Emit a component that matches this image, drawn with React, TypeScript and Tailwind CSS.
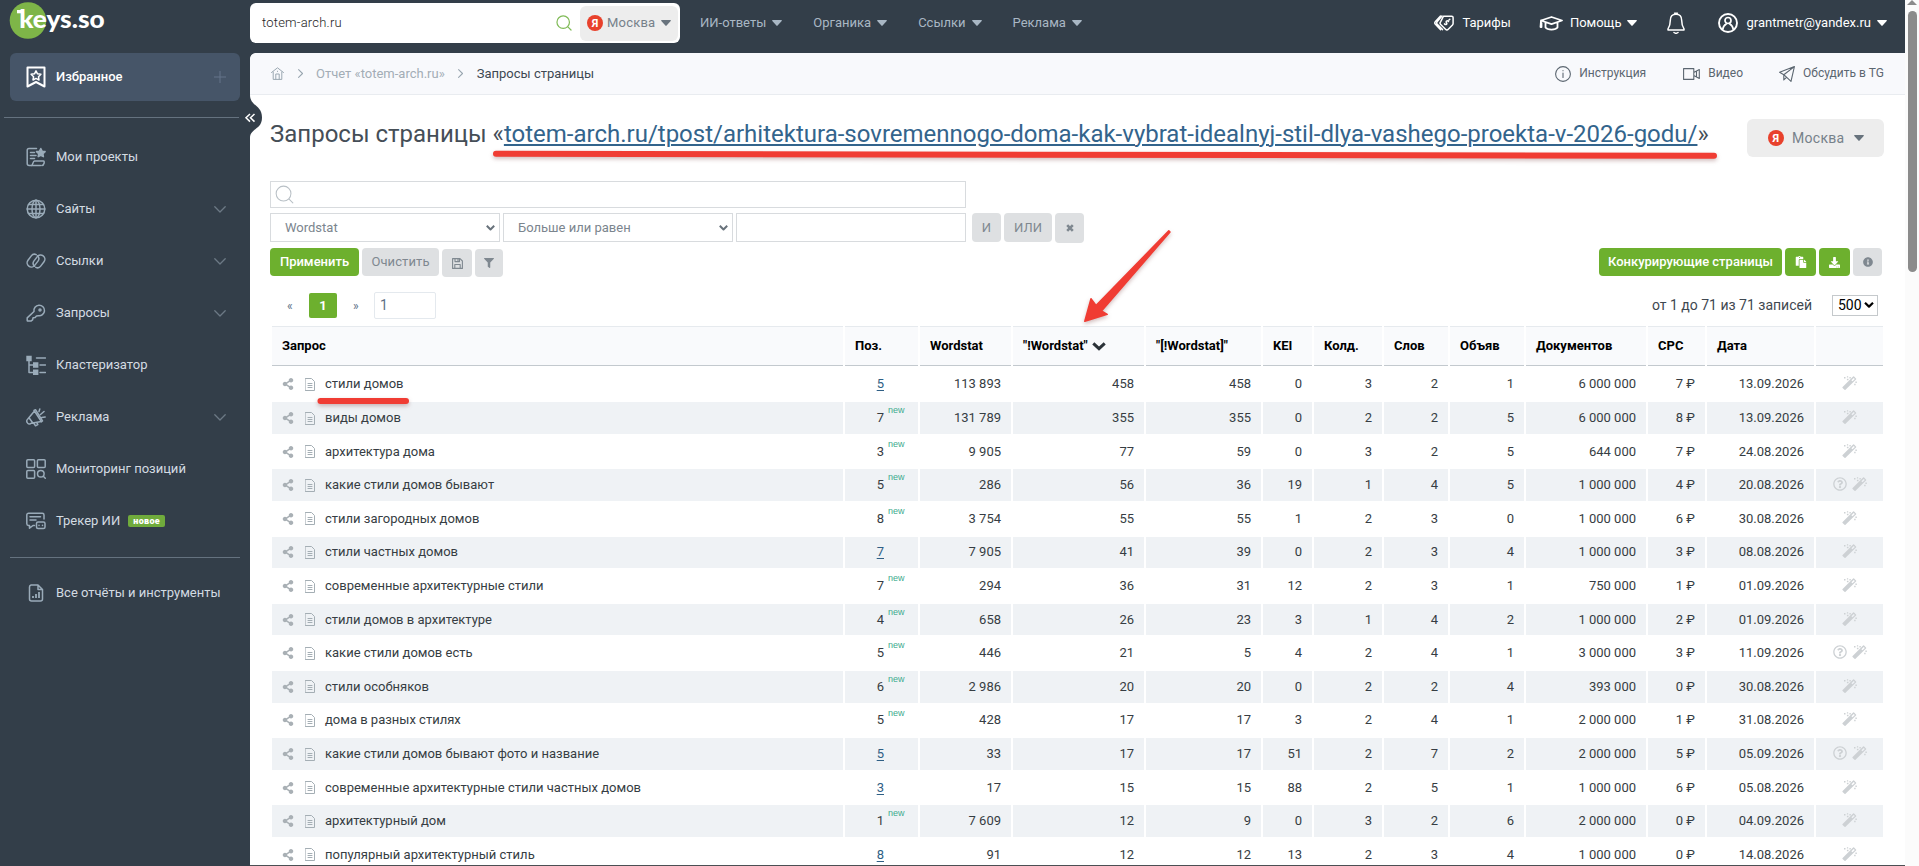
import type { ReactNode } from "react";
import {
  FaDownload,
  FaFilter,
  FaInfoCircle,
  FaPaste,
  FaRegQuestionCircle,
  FaShareAlt,
} from "react-icons/fa";

type Row = {
  query: string;
  pos: number;
  isNew: boolean;
  values: string[];
  question?: boolean;
};

const rows: Row[] = [
  { query: "стили домов", pos: 5, isNew: false, values: ["113 893", "458", "458", "0", "3", "2", "1", "6 000 000", "7 ₽", "13.09.2026"] },
  { query: "виды домов", pos: 7, isNew: true, values: ["131 789", "355", "355", "0", "2", "2", "5", "6 000 000", "8 ₽", "13.09.2026"] },
  { query: "архитектура дома", pos: 3, isNew: true, values: ["9 905", "77", "59", "0", "3", "2", "5", "644 000", "7 ₽", "24.08.2026"] },
  { query: "какие стили домов бывают", pos: 5, isNew: true, values: ["286", "56", "36", "19", "1", "4", "5", "1 000 000", "4 ₽", "20.08.2026"], question: true },
  { query: "стили загородных домов", pos: 8, isNew: true, values: ["3 754", "55", "55", "1", "2", "3", "0", "1 000 000", "6 ₽", "30.08.2026"] },
  { query: "стили частных домов", pos: 7, isNew: false, values: ["7 905", "41", "39", "0", "2", "3", "4", "1 000 000", "3 ₽", "08.08.2026"] },
  { query: "современные архитектурные стили", pos: 7, isNew: true, values: ["294", "36", "31", "12", "2", "3", "1", "750 000", "1 ₽", "01.09.2026"] },
  { query: "стили домов в архитектуре", pos: 4, isNew: true, values: ["658", "26", "23", "3", "1", "4", "2", "1 000 000", "2 ₽", "01.09.2026"] },
  { query: "какие стили домов есть", pos: 5, isNew: true, values: ["446", "21", "5", "4", "2", "4", "1", "3 000 000", "3 ₽", "11.09.2026"], question: true },
  { query: "стили особняков", pos: 6, isNew: true, values: ["2 986", "20", "20", "0", "2", "2", "4", "393 000", "0 ₽", "30.08.2026"] },
  { query: "дома в разных стилях", pos: 5, isNew: true, values: ["428", "17", "17", "3", "2", "4", "1", "2 000 000", "1 ₽", "31.08.2026"] },
  { query: "какие стили домов бывают фото и название", pos: 5, isNew: false, values: ["33", "17", "17", "51", "2", "7", "2", "2 000 000", "5 ₽", "05.09.2026"], question: true },
  { query: "современные архитектурные стили частных домов", pos: 3, isNew: false, values: ["17", "15", "15", "88", "2", "5", "1", "1 000 000", "6 ₽", "05.08.2026"] },
  { query: "архитектурный дом", pos: 1, isNew: true, values: ["7 609", "12", "9", "0", "3", "2", "6", "2 000 000", "0 ₽", "04.09.2026"] },
  { query: "популярный архитектурный стиль", pos: 8, isNew: false, values: ["91", "12", "12", "13", "2", "3", "4", "1 000 000", "0 ₽", "14.08.2026"] },
];

const headers = ["Запрос", "Поз.", "Wordstat", '"!Wordstat"', '"[!Wordstat]"', "KEI", "Колд.", "Слов", "Объяв", "Документов", "CPC", "Дата", ""];

const tableGrid =
  "grid grid-cols-[571px_73px_91px_131px_115px_49px_68px_64px_74px_120px_57px_107px_67px] gap-x-[2px]";

function Icon({ children, className, box = "0 0 20 20" }: { children: ReactNode; className: string; box?: string }) {
  return (
    <svg
      viewBox={box}
      className={className}
      fill="none"
      stroke="currentColor"
      strokeWidth="1.5"
      strokeLinecap="round"
      strokeLinejoin="round"
    >
      {children}
    </svg>
  );
}

function Caret({ className = "" }: { className?: string }) {
  return (
    <svg viewBox="0 0 10 6" className={`h-[6px] w-[10px] shrink-0 ${className}`} fill="currentColor">
      <path d="M.8 0h8.4a.6.6 0 0 1 .5 1L5.6 5.6a.8.8 0 0 1-1.2 0L.3 1a.6.6 0 0 1 .5-1z" />
    </svg>
  );
}

function YandexBadge() {
  return (
    <span className="flex size-4 shrink-0 items-center justify-center rounded-full bg-[#e8412c] text-[11px] font-bold leading-none text-white">
      Я
    </span>
  );
}

function Magnifier({ className, width = "1.5" }: { className: string; width?: string }) {
  return (
    <Icon className={className}>
      <circle cx="9" cy="9" r="7.8" strokeWidth={width} />
      <path d="M14.8 14.8 18.8 18.8" strokeWidth={width} />
    </Icon>
  );
}

function Wand() {
  return (
    <svg viewBox="0 0 15 14" className="h-[14px] w-[15px]" fill="currentColor">
      <path d="M11.1.5a.7.7 0 0 1 1 0l1.9 1.9a.7.7 0 0 1 0 1L3.500 13.800a.7.7 0 0 1-1 0L.6 11.900a.7.7 0 0 1 0-1zM9.400 4.200l1.100 1.100 2.300-2.300-1.100-1.100z" fillRule="evenodd" />
      <path d="M2 1h1.500v1.500H2zM4.900.3h1.300v1.200H4.900zM7.400 1h1.400v1.500H7.400zM4.900 2.700h1.600v1.500H4.900zM13.400 5.400h1.400v1.500h-1.400zM12.200 7.700h1.400v1.500h-1.400z" />
    </svg>
  );
}

const menu = [
  {
    label: "Мои проекты",
    icon: (
      <>
        <path d="M10.5 1.5H3a1.8 1.8 0 0 0-1.8 1.8v13.2a2 2 0 0 0 2 2h11.3" />
        <path d="M4.5 5.5h4M4.5 8.5h5.5M4.5 11.5h4M5.5 18.5c1.3 0 1.3-4.5 3-4.5h9c1.3 0 .8 4.5-1.7 4.5" />
        <path d="m14.8 1.5 1.3 2.7 3 .4-2.2 2.1.5 3-2.6-1.4-2.6 1.4.5-3-2.2-2.1 3-.4z" fill="currentColor" />
      </>
    ),
  },
  {
    label: "Сайты",
    arrow: true,
    icon: (
      <>
        <circle cx="10" cy="10" r="8.8" />
        <ellipse cx="10" cy="10" rx="4" ry="8.8" />
        <path d="M10 1.2v17.6M1.2 10h17.6M2.5 5.5h15M2.5 14.5h15" />
      </>
    ),
  },
  {
    label: "Ссылки",
    arrow: true,
    icon: (
      <>
        <path d="M10.2 3.6A4 4 0 0 0 5.3 4.9L2 9.3a4.2 4.2 0 0 0 6.7 5.1l3.3-4.3a4 4 0 0 0-.5-5.3" />
        <path d="M9.8 16.4a4 4 0 0 0 4.9-1.3L18 10.7a4.2 4.2 0 0 0-6.7-5.1L8 9.9a4 4 0 0 0 .5 5.3" />
      </>
    ),
  },
  {
    label: "Запросы",
    arrow: true,
    icon: (
      <>
        <path d="M8 8.5a5.3 5.3 0 1 1 4.2 4.2l-1.7.2-1.4 1.7-2 .2-.5 2-1.7 1.3H1.8a.6.6 0 0 1-.6-.6v-2.6z" />
        <circle cx="14" cy="7" r="1" />
      </>
    ),
  },
  {
    label: "Кластеризатор",
    icon: (
      <>
        <path d="M3 3v14.5h6M3 10h6M10.5 3h9M14 10h5.5M14 17.5h5.5" />
        <path d="M.3.8h5.4v5.4H.3zM7 7.3h5.4v5.4H7zM7 14.6h5.4V20H7z" fill="currentColor" stroke="none" />
      </>
    ),
  },
  {
    label: "Реклама",
    arrow: true,
    icon: (
      <>
        <path d="m8.5 4 6.8 10.5-10.1 1.8a2.5 2.5 0 0 1-4-.8 2.5 2.5 0 0 1 .6-3.5zM3 10.8l4 5.4M8 16.5l1.5 2.3 2.3-1.2-.8-1.7" />
        <path d="m8 3.5 1.5-.8L16.5 14l-1.2.8M13 4.5l.8-2.5M14.5 7.5l3.5-3M15.8 10.5l3.4-.5" />
      </>
    ),
  },
  {
    label: "Мониторинг позиций",
    icon: (
      <>
        <rect x=".8" y=".8" width="7.8" height="7.8" rx="1" />
        <rect x="11.4" y=".8" width="7.8" height="7.8" rx="1" />
        <rect x=".8" y="11.4" width="7.8" height="7.8" rx="1" />
        <circle cx="14.8" cy="14.8" r="3.3" />
        <path d="m17.3 17.3 2 2" />
      </>
    ),
  },
  {
    label: "Трекер ИИ",
    badge: "новое",
    icon: (
      <>
        <path d="M8.5 14.5H7l-3.5 2.7v-2.7h-1A1.7 1.7 0 0 1 .8 12.8V4A1.7 1.7 0 0 1 2.5 2.3h13.8A1.7 1.7 0 0 1 18 4v4M4 5.8h10.5M4 9h6" />
        <path d="M12 11h5.5a1.5 1.5 0 0 1 1.5 1.5v3.5a1.5 1.5 0 0 1-1.5 1.5H12a1.5 1.5 0 0 1-1.5-1.5v-3.5A1.5 1.5 0 0 1 12 11zM13 14.2v.2M16.5 14.2v.2" />
      </>
    ),
  },
];

function Logo() {
  return (
    <svg viewBox="0 0 110 42" className="h-[42px] w-[110px]">
      <circle cx="28" cy="20.500" r="18.300" fill="#7eb548" />
      <rect x="17" y="10" width="6" height="3.300" fill="#fff" />
      <text x="19.200" y="27.600" textLength="85.500" lengthAdjust="spacingAndGlyphs" fill="#fff" fontFamily="Lato" fontWeight="900" fontSize="24">
        keys.so
      </text>
    </svg>
  );
}

function Sidebar() {
  return (
    <aside className="w-[250px] shrink-0 bg-[#333e49] text-[13px] text-[#d3dbe2]">
      <Logo />
      <div className="mx-[10px] mt-[11px] flex h-12 items-center rounded-md bg-[#465568] pl-4 pr-[14px] font-medium text-white">
        <Icon className="-ml-px mr-[10px] size-[22px]" box="0 0 22 22">
          <path d="M2.500 1.500h17v19l-8.500-4.500-8.500 4.500z" strokeWidth="2" />
          <path d="m11 4.800 1.500 3 3.400.5-2.400 2.400.5 3.300-3-1.600-3 1.600.6-3.300L6.100 8.300l3.400-.5z" />
        </Icon>
        <span className="-ml-px flex-1 pb-[2px]">Избранное</span>
        <Icon className="size-3 text-[#64748a]" box="0 0 12 12">
          <path d="M6 0v12M0 6h12" strokeWidth="1" />
        </Icon>
      </div>
      <div className="ml-1 mr-[11px] mt-4 border-t border-[#65727f]" />
      <nav className="mt-[13px]">
        {menu.map((item) => (
          <a key={item.label} className="flex h-[52px] items-center pl-[26px] pr-6">
            <Icon className="mr-[10px] size-5 text-[#9aabb9]">{item.icon}</Icon>
            <span className="pb-[2px]">{item.label}</span>
            {item.badge && (
              <span className="ml-2 flex h-3 w-[37px] items-center justify-center rounded-[2px] bg-[#70ab3c] text-[9px] font-black leading-none tracking-[0.3px] text-white">
                {item.badge}
              </span>
            )}
            {item.arrow && (
              <Icon className="ml-auto h-[7px] w-3 text-[#6c7985]" box="0 0 12 7">
                <path d="m.8.8 5.200 5.200L11.200.8" strokeWidth="1.300" />
              </Icon>
            )}
          </a>
        ))}
      </nav>
      <div className="mx-[10px] mt-[10px] border-t border-[#65727f]" />
      <a className="mt-[9px] flex h-[52px] items-center pl-[28px]">
        <Icon className="mr-3 h-[18px] w-4 text-[#9aabb9]" box="0 0 16 18">
          <path d="M3 1h7l4.500 4.500V15a2 2 0 0 1-2 2H3.500a2 2 0 0 1-2-2V3A2 2 0 0 1 3 1zM10 1v4.500h4.500" />
          <path d="M5 12v2M8 10v4M11 8v6" strokeWidth="1.800" strokeLinecap="butt" />
        </Icon>
        <span className="pb-[2px]">Все отчёты и инструменты</span>
      </a>
    </aside>
  );
}

function TopBar() {
  return (
    <header className="flex h-[53px] items-start text-[13px] text-white">
      <div className="mt-[3px] flex h-10 w-[430px] items-center rounded-md bg-white pl-3 pr-[2px]">
        <span className="flex-1 pb-[2px] font-light tracking-[0.2px] text-[#222]">totem-arch.ru</span>
        <Magnifier className="mr-2 size-4 text-[#80bb57]" />
        <div className="flex h-[35px] w-[98px] items-center rounded-md bg-[#ededed] pl-[7px] tracking-[0.2px] text-[#76818a]">
          <YandexBadge />
          <span className="ml-1 flex-1 pb-px">Москва</span>
          <Caret className="mr-[7px] text-[#68737d]" />
        </div>
      </div>
      <nav className="flex h-[46px] items-center pl-5 text-[#a9b7c4]">
        {["ИИ-ответы", "Органика", "Ссылки", "Реклама"].map((label) => (
          <a key={label} className="mr-[31px] flex items-center gap-[6px]">
            <span className="pb-[2px]">{label}</span>
            <Caret />
          </a>
        ))}
      </nav>
      <div className="ml-auto flex h-[46px] items-center pr-[18px]">
        <Icon className="mr-2 h-4 w-5" box="0 0 20 16">
          <path d="M9.500 1.200h8.200a1.400 1.400 0 0 1 1.400 1.400v6a2 2 0 0 1-.6 1.400l-4.200 4.300a2 2 0 0 1-2.800 0L6.700 9.500a2 2 0 0 1 0-2.800z" />
          <path d="M6.500 1 1.400 6.500a2 2 0 0 0 0 2.700l5.200 5.600M8 1 3.300 6.500a2 2 0 0 0 0 2.700l5.200 5.400M14.500 6.500c-1.500-1.500-3 0-2 1.200s-.5 2.600-2 1.200M15 5l.8-.8" />
        </Icon>
        <span className="mr-7 pb-[2px]">Тарифы</span>
        <Icon className="mr-[7px] h-[15px] w-6" box="0 0 24 15">
          <path d="M2 4.500 12.500 1 23 4.500 12.500 8.200zM6.500 6.500v5c2 2.800 10 2.800 12 0v-5M2 4.500 1.500 11M2.500 7v4" strokeWidth="1.800" />
        </Icon>
        <span className="mr-[6px] pb-[2px]">Помощь</span>
        <Caret />
        <Icon className="ml-[30px] mr-[33px] h-[22px] w-[18px]" box="0 0 18 22">
          <path d="M9 2.200c3.800 0 5.700 2.800 5.700 6.200 0 4.500 1 6.500 2.300 8.400v1.200H1v-1.200c1.300-1.900 2.300-3.900 2.300-8.400C3.300 5 5.200 2.200 9 2.200zM7.500 1.200h3M7 20.500c1 .8 3 .8 4 0" />
        </Icon>
        <Icon className="mr-2 size-5">
          <circle cx="10" cy="10" r="9" strokeWidth="1.900" />
          <circle cx="10" cy="7.500" r="3" strokeWidth="1.700" />
          <path d="M4.800 16.200c.3-3 2-4.500 3.400-5.300M15.200 16.200c-.3-3-2-4.500-3.400-5.300" strokeWidth="1.700" />
        </Icon>
        <span className="mr-[6px] pb-[2px]">grantmetr@yandex.ru</span>
        <Caret />
      </div>
    </header>
  );
}

function Crumbs() {
  return (
    <div className="flex h-[42px] items-center rounded-tl-md border-b border-[#e9ecf0] bg-[#f8f9fc] pl-[21px] pr-[21px] text-[13px] text-[#5b6670]">
      <Icon className="size-[13px] text-[#9aa7b1]" box="0 0 13 13">
        <path d="M.5 5.500 6.500.8l6 4.700M2.200 5v7.400h8.600V5M4.800 12V7h3.400v5M6.500 4.200v.3" strokeWidth="1" />
      </Icon>
      <Icon className="ml-[14px] h-[9px] w-[5px] text-[#9aa7b1]" box="0 0 5 9">
        <path d="m.6.6 3.900 3.900L.6 8.400" strokeWidth="1.100" />
      </Icon>
      <span className="ml-[13px] pb-px text-[#a3adb6]">Отчет «totem-arch.ru»</span>
      <Icon className="ml-[13px] h-[9px] w-[5px] text-[#9aa7b1]" box="0 0 5 9">
        <path d="m.6.6 3.900 3.900L.6 8.400" strokeWidth="1.100" />
      </Icon>
      <span className="ml-[14px] pb-px text-[#3d4852]">Запросы страницы</span>
      <div className="ml-auto flex items-center text-[12px]">
        <Icon className="mr-2 size-4" box="0 0 16 16">
          <circle cx="8" cy="8" r="7.400" strokeWidth="1.100" />
          <path d="M8 7v4.500M8 4.500v.3" strokeWidth="1.100" />
        </Icon>
        <span className="pb-[2px]">Инструкция</span>
        <Icon className="ml-[37px] mr-2 h-3 w-[17px]" box="0 0 17 12">
          <path d="M.6.6h10.200v10.800H.6zM10.800 4.500l5.500-3v9l-5.500-3M13.500 3.500v5" strokeWidth="1.100" />
        </Icon>
        <span className="pb-[2px]">Видео</span>
        <Icon className="ml-9 mr-2 size-4" box="0 0 16 16">
          <path d="M15.400.6.6 6.200l4.200 2.500L12 15.400zM15.400.6 4.800 8.700v5.200l2.700-2.500" strokeWidth="1.100" />
        </Icon>
        <span className="pb-[2px]">Обсудить в TG</span>
      </div>
    </div>
  );
}

function Select({ label }: { label: string }) {
  return (
    <div className="flex h-[29px] w-[230px] items-center justify-between border border-[#d8dbde] bg-white pl-[14px] pr-1 text-[#7b858e]">
      {label}
      <Icon className="h-[6px] w-[9px] text-[#68727b]" box="0 0 9 6">
        <path d="m.8.8 3.700 3.700L8.200.8" strokeWidth="2" strokeLinecap="butt" />
      </Icon>
    </div>
  );
}

function Filters() {
  const grey = "flex items-center justify-center rounded-[4px] bg-[#dee0e2] text-[#7f8890]";
  const green = "flex items-center justify-center rounded-[4px] bg-[#6db02e] text-white";
  return (
    <div className="text-[13px]">
      <div className="flex h-[27px] w-[696px] items-center border border-[#d8dbde] pb-px pl-1">
        <Magnifier className="size-[19px] text-[#b9c0c6]" width="1.1" />
      </div>
      <div className="mt-[5px] flex items-start gap-[3px]">
        <Select label="Wordstat" />
        <Select label="Больше или равен" />
        <div className="h-[29px] w-[230px] border border-[#d8dbde]" />
        <button className={`${grey} ml-[3px] h-[29px] w-[29px]`}>И</button>
        <button className={`${grey} h-[29px] w-12`}>ИЛИ</button>
        <button className={`${grey} h-[30px] w-[29px]`}>
          <Icon className="size-2" box="0 0 8 8">
            <path d="m1.200 1.200 5.600 5.600M6.800 1.200 1.200 6.800" strokeWidth="2.600" strokeLinecap="butt" />
          </Icon>
        </button>
      </div>
      <div className="mt-[5px] flex items-start gap-[3px]">
        <button className={`${green} h-7 w-[89px] pb-px font-medium`}>Применить</button>
        <button className={`${grey} h-7 w-[77px] pb-px tracking-[0.1px]`}>Очистить</button>
        <button className={`${grey} mt-px h-7 w-[30px]`}>
          <Icon className="size-[11px]" box="0 0 11 11">
            <path d="M.6.6h7.400l2.400 2.400v7.400H.6zM3 .6v3h4.500v-3M2.800 10.400V6.500h5.400v3.900M6 1.200v1.600" strokeWidth="1.100" />
          </Icon>
        </button>
        <button className={`${grey} mt-px h-7 w-7`}>
          <FaFilter size={10} />
        </button>
        <button className={`${green} ml-auto h-7 w-[183px] pb-px font-medium`}>Конкурирующие страницы</button>
        <button className={`${green} h-7 w-[31px]`}>
          <FaPaste size={12} />
        </button>
        <button className={`${green} h-7 w-[31px]`}>
          <FaDownload size={11} />
        </button>
        <button className={`${grey} h-7 w-[29px]`}>
          <FaInfoCircle size={10} />
        </button>
      </div>
    </div>
  );
}

function Pagination() {
  return (
    <div className="mt-[15px] flex h-[27px] items-center text-[13px] text-[#5d7187]">
      <span className="ml-[17px] w-[22px] text-[12px]">«</span>
      <span className="flex h-[25px] w-7 items-center justify-center rounded-[2px] bg-[#6db02e] font-bold text-white">1</span>
      <span className="ml-4 w-[21px] text-[12px]">»</span>
      <span className="flex h-[27px] w-[62px] items-center rounded-[2px] border border-[#e4e9ee] pb-px pl-[5px] text-[14px]">1</span>
      <span className="ml-auto pb-px text-[14px] text-[#3f4850]">от 1 до 71 из 71 записей</span>
      <div className="ml-5 mr-1 flex h-[21px] w-[46px] items-center justify-between border border-[#c5c9cc] pb-px pl-[5px] pr-[3px] text-[14px] text-black">
        500
        <Icon className="h-[6px] w-[10px]" box="0 0 10 6">
          <path d="M1 .8 5 4.600 9 .8" strokeWidth="2.200" strokeLinecap="butt" />
        </Icon>
      </div>
    </div>
  );
}

function QueryTable() {
  return (
    <div className="ml-[2px] mt-[7px] text-[13px] text-[#363d43]">
      <div className={`${tableGrid} mb-[2.7px]`}>
        {headers.map((label, i) => (
          <div
            key={i}
            className="flex h-10 items-center border-b border-t border-b-[#c3c9ce] border-t-[#e6eaee] bg-[#f9fafc] pb-px pl-[10px] font-bold text-black"
          >
            {label}
            {i === 3 && (
              <Icon className="ml-1 mt-[2px] h-[9px] w-[14px] text-[#2b3238]" box="0 0 14 9">
                <path d="m1.300 1.300 5.700 5.400 5.700-5.400" strokeWidth="3" strokeLinecap="butt" strokeLinejoin="miter" />
              </Icon>
            )}
          </div>
        ))}
      </div>
      {rows.map((row, i) => {
        const cell = `${i % 2 ? "bg-[#eff2f5]" : "bg-white"} flex items-center`;
        return (
          <div key={row.query} className={`${tableGrid} mb-[2px] h-[31.6px]`}>
            <div className={`${cell} pl-[10px]`}>
              <FaShareAlt size={12} className="text-[#a9b0b5]" />
              <Icon className="ml-[11px] mr-[10px] h-[13px] w-[10px] text-[#a4aeb4]" box="0 0 10 13">
                <path d="M.5.5h6l3 3v9h-9zM3 5.500h4M3 7.500h4M3 9.500h4" strokeWidth="1" />
              </Icon>
              <span className="pb-px">{row.query}</span>
            </div>
            <div className={`${cell} pb-px`}>
              <span className={`w-[39px] text-right ${row.isNew ? "" : "text-[#2f5f85] underline underline-offset-2"}`}>{row.pos}</span>
              {row.isNew && (
                <span className="ml-1 self-start pt-[3px] font-['Liberation_Sans',sans-serif] text-[9px] text-[#3dab8e]">new</span>
              )}
            </div>
            {row.values.map((value, n) => (
              <div key={n} className={`${cell} justify-end pb-px pr-[10px]`}>
                {value}
              </div>
            ))}
            <div className={`${cell} justify-center gap-[5px] pb-[2px] text-[#cdd1d4]`}>
              {row.question && <FaRegQuestionCircle size={14} />}
              <Wand />
            </div>
          </div>
        );
      })}
    </div>
  );
}

// Red marker strokes drawn over the page
function Marks() {
  return (
    <svg
      viewBox="0 0 1919 866"
      className="pointer-events-none absolute inset-0 h-[866px] w-[1919px] drop-shadow-[0_2px_2px_rgba(120,60,60,0.35)]"
      fill="#f03c33"
      stroke="#f03c33"
      strokeLinecap="round"
      strokeLinejoin="round"
    >
      <path d="M496 153.800 1714 155.800" strokeWidth="6" />
      <path d="M320.500 401H406" strokeWidth="6" />
      <path d="M1084.800 321.200 1091 298.700 1096 305.500 1168.800 230.800 1170 232 1101.500 311 1107.200 314.300z" strokeWidth="1.500" />
    </svg>
  );
}

export default function App() {
  return (
    <div className="relative flex h-[866px] w-[1919px] overflow-hidden bg-[#333e49] font-['Roboto',sans-serif] leading-[normal]">
      <Sidebar />
      <div className="flex w-[1655px] shrink-0 flex-col">
        <TopBar />
        <main className="relative flex-1 overflow-hidden rounded-tl-md border-b border-[#4b4f53] bg-white">
          <Crumbs />
          <div className="pl-5 pr-[21px]">
            <div className="mt-6 flex h-[38px] items-center justify-between">
              <h1 className="-mt-[9px] whitespace-nowrap text-[24px] text-[#454e57]">
                Запросы страницы «
                <a className="text-[#33648c] underline decoration-2 underline-offset-2">
                  totem-arch.ru/tpost/arhitektura-sovremennogo-doma-kak-vybrat-idealnyj-stil-dlya-vashego-proekta-v-2026-godu/
                </a>
                »
              </h1>
              <div className="flex h-[38px] w-[137px] items-center rounded-md bg-[#ededed] pl-[21px] text-[14px] tracking-[0.3px] text-[#76818a]">
                <YandexBadge />
                <span className="ml-2 flex-1 pb-px">Москва</span>
                <Caret className="mr-5 text-[#68737d]" />
              </div>
            </div>
            <div className="mr-[2px] mt-6">
              <Filters />
              <Pagination />
              <QueryTable />
            </div>
          </div>
        </main>
      </div>
      <div className="flex w-[14px] flex-col items-center bg-[#fbfbfb]">
        <div className="h-0 w-0 border-x-[5px] border-b-[5px] border-x-transparent border-b-[#8b8b8b]" />
        <div className="mt-[6px] h-[261px] w-[9px] rounded-full bg-[#8b8b8b]" />
      </div>
      <svg viewBox="0 0 20 44" className="absolute left-[244px] top-[95px] h-11 w-5">
        <path d="M0 0h6c0 11 12 10 12 22.500S6 33 6 43H0z" fill="#333e49" />
        <path d="m6 19-4 3.800 4 3.800M10.500 19l-4 3.800 4 3.800" fill="none" stroke="#fff" strokeWidth="1.500" />
      </svg>
      <Marks />
    </div>
  );
}
